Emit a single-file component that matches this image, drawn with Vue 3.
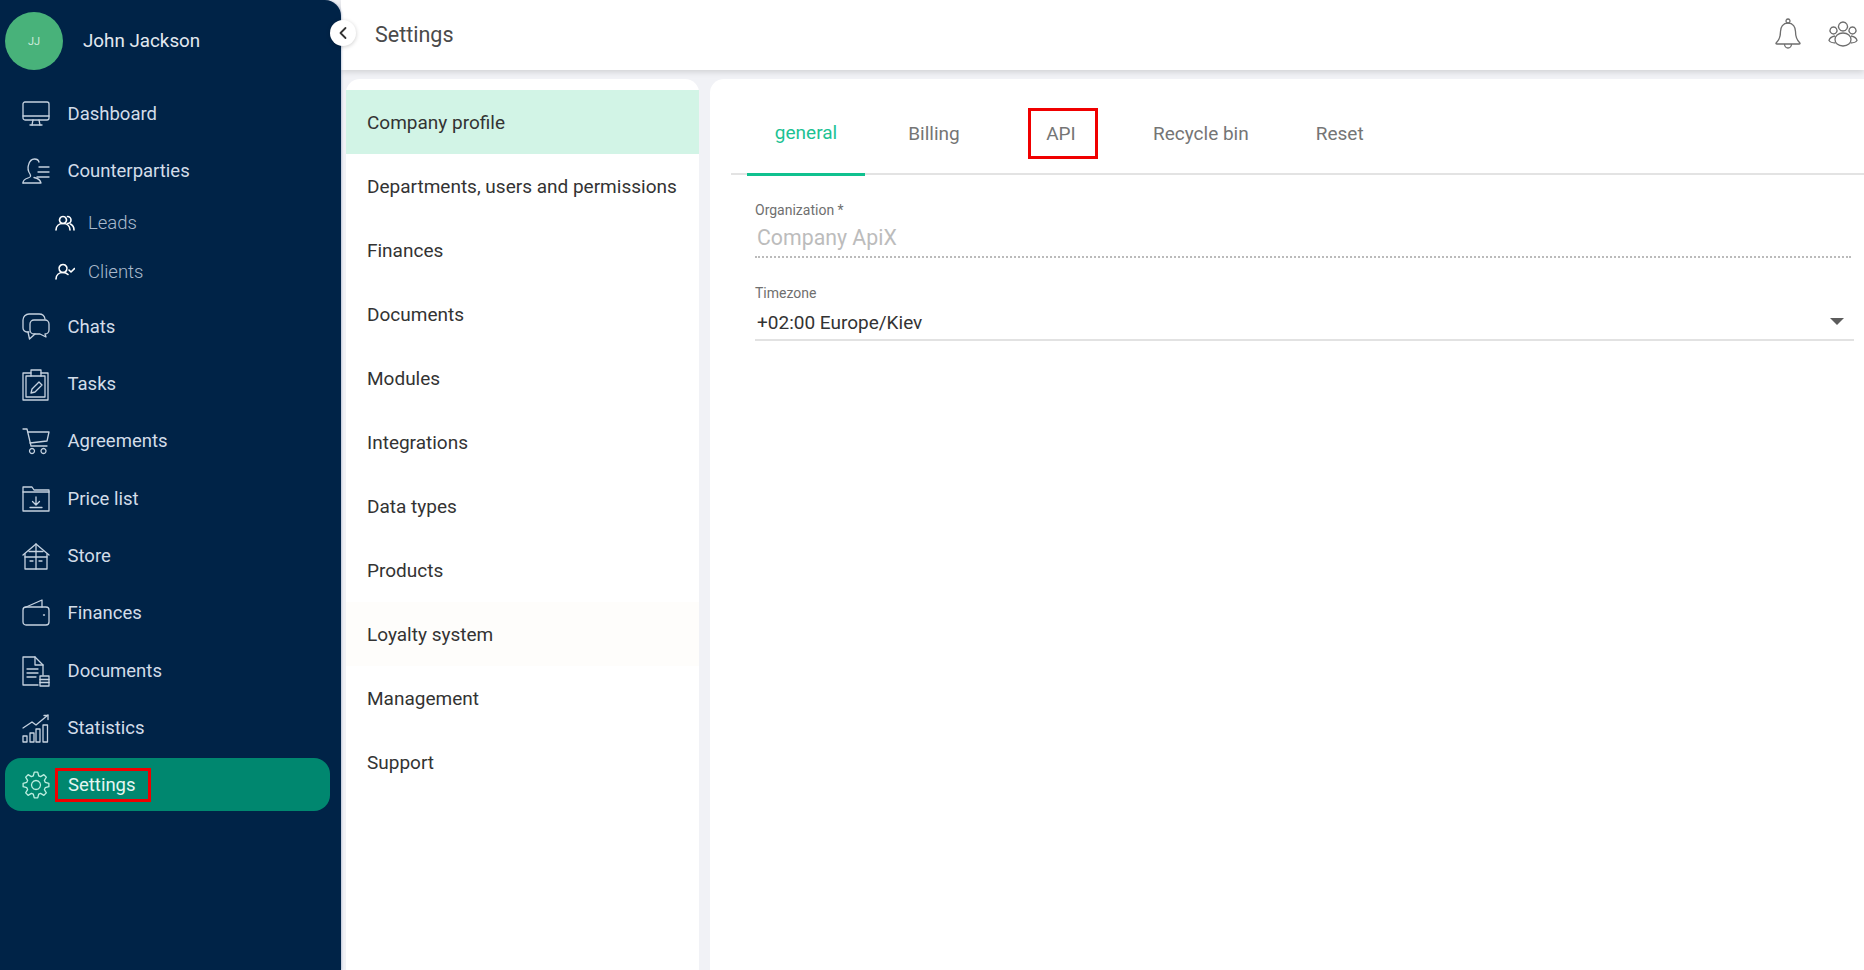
<script setup>
const gear = (() => {
  const cx = 14, cy = 14, n = 8
  let d = ''
  const pt = (r, a) => `${(cx + r * Math.cos(a)).toFixed(2)} ${(cy + r * Math.sin(a)).toFixed(2)}`
  for (let i = 0; i < n; i++) {
    const a = (i * 2 * Math.PI) / n - Math.PI / 2
    const s = (2 * Math.PI) / n
    d += `${i ? 'L' : 'M'}${pt(9.6, a - s * 0.36)} L${pt(13, a - s * 0.17)} L${pt(13, a + s * 0.17)} L${pt(9.6, a + s * 0.36)} `
  }
  return d + 'Z M14 9.5 a4.5 4.5 0 1 0 0.01 0 Z'
})()

const nav = [
  { name: 'Dashboard', paths: ['M3 2h22a2 2 0 0 1 2 2v14a2 2 0 0 1-2 2H3a2 2 0 0 1-2-2V4a2 2 0 0 1 2-2z', 'M1 16h26', 'M11 20l-1 5M17 20l1 5', 'M8 25h12'] },
  { name: 'Counterparties', paths: ['M1 26c0-3 2-4 5-5 3-1 3-2 2-4-2-3-2.500-6-1.500-9 .8-3 3-6 6-6 2 0 4 1 4.500 3', 'M12 20.500c3 .5 6 1.500 7 5.500H1', 'M17 10h10M16 15h11M15 20h12'] },
  {
    name: 'Leads', sub: true,
    paths: ['M8 2.500a3.500 3.500 0 1 0 .01 0z', 'M1 16c0-4 3-6.500 7-6.500s7 2.500 7 6.500', 'M12.500 2.500a3.500 3.500 0 0 1 0 7', 'M15.500 10c2 1 3.500 3 3.500 6'],
  },
  {
    name: 'Clients', sub: true,
    paths: ['M8 1.500a4 4 0 1 0 .01 0z', 'M1 16c0-4 3-6.500 7-6.500 2 0 3.500.5 5 2', 'M14 7l2 2 3.500-3.500'],
  },
  { name: 'Chats', paths: ['M7 19H5a4 4 0 0 1-4-4V7a6 6 0 0 1 6-6h10c3 0 5.500 1.500 6 5', 'M6 19l1.500 7 5.500-5', 'M12 7h11a4 4 0 0 1 4 4v6a4 4 0 0 1-4 4l1 3-6-3h-6a4 4 0 0 1-4-4v-6a4 4 0 0 1 4-4z'] },
  { name: 'Tasks', paths: ['M9 3H1v27h25V3h-7', 'M9 6H4v21h19V6h-4', 'M9 0h10v6H9z', 'M9 23l1-4 7-7 3 3-7 7z'] },
  { name: 'Agreements', paths: ['M1 2h4l4 17h16', 'M6 5h21l-2 9-17 2', 'M10 21.500a2.500 2.500 0 1 0 .01 0zM21.500 21.500a2.500 2.500 0 1 0 .01 0z'] },
  { name: 'Price list', paths: ['M1 26V2h9l2 3h15v21z', 'M1 7h26', 'M14 12v8M10.500 16.500l3.500 3.500 3.500-3.500', 'M8 22.500h12'] },
  { name: 'Store', paths: ['M1 13L14 2l13 11', 'M3 12v15h22V12', 'M14 2v25', 'M3 15h22', 'M8 19h3M17 19h3', 'M7 9.500h14'] },
  { name: 'Finances', paths: ['M4 8h20a3 3 0 0 1 3 3v12a3 3 0 0 1-3 3H4a3 3 0 0 1-3-3V11a3 3 0 0 1 3-3z', 'M3 8.500L20 1v7', 'M21.500 16h1'] },
  { name: 'Documents', paths: ['M16 28H1V0h12l8 8v10', 'M13 0v8h8', 'M5 12h11M5 16h11M5 20h9', 'M18 19h9v10h-9z', 'M18 22.500h9M18 25.500h9'] },
  { name: 'Statistics', paths: ['M1 22h4v6H1zM8 19h4v9H8zM14 15h4v13h-4zM21 11h4.500v17H21z', 'M1 14l9-6 4 3L26 1', 'M22 1.500h4v4'] },
  { name: 'Settings', active: true, paths: [gear] },
]

const menu = ['Company profile', 'Departments, users and permissions', 'Finances', 'Documents', 'Modules', 'Integrations', 'Data types', 'Products', 'Loyalty system', 'Management', 'Support']
const tabs = ['general', 'Billing', 'API', 'Recycle bin', 'Reset']
</script>

<template>
  <div class="app">
    <aside class="sidebar">
      <div class="user">
        <div class="avatar">JJ</div>
        <span class="user-name">John Jackson</span>
      </div>
      <nav class="nav">
        <div
          v-for="item in nav"
          :key="item.name"
          class="item"
          :class="{ sub: item.sub, active: item.active, parent: item.name === 'Counterparties', lastsub: item.name === 'Clients' }"
        >
          <svg v-if="item.sub" class="ic-sub" width="20" height="18" viewBox="0 0 20 18" fill="none">
            <path v-for="(d, i) in item.paths" :key="i" :d="d" />
          </svg>
          <svg v-else class="ic" width="28" height="28" viewBox="0 0 28 28" fill="none">
            <path v-for="(d, i) in item.paths" :key="i" :d="d" />
          </svg>
          <span v-if="item.active" class="boxed-side">{{ item.name }}</span>
          <span v-else>{{ item.name }}</span>
        </div>
      </nav>
    </aside>

    <div class="main">
      <button class="collapse" aria-label="Collapse">
        <svg width="12" height="14" viewBox="0 0 12 14" fill="none"><path d="M8.500 2L3.500 7l5 5" /></svg>
      </button>
      <header class="header">
        <h1 class="title">Settings</h1>
        <div class="header-icons">
          <svg width="28" height="32" viewBox="0 0 28 32" fill="none">
            <path d="M14 5a2 2 0 1 1 .01 0z" />
            <path d="M14 5c-5 0-7.500 4-7.500 8.500 0 5-1 8-4 11-1 1-.5 1.500.5 1.500h22c1 0 1.500-.5.500-1.500-3-3-4-6-4-11C21.500 9 19 5 14 5z" />
            <path d="M10.500 26a3.500 4 0 0 0 7 0" />
          </svg>
          <svg width="30" height="26" viewBox="0 0 30 26" fill="none">
            <path d="M15 1a4.500 4.500 0 1 0 .01 0zM5.500 6a3.500 3.500 0 1 0 .01 0zM24.500 6a3.500 3.500 0 1 0 .01 0z" />
            <path d="M15 12c-5 0-8 3-8 6.500S10 25 15 25s8-3 8-6.500S20 12 15 12z" />
            <path d="M7 15c-3 .5-5.500 2-6 4.500 1 1.500 3.500 2.500 6.500 2.500M23 15c3 .5 5.500 2 6 4.500-1 1.500-3.500 2.500-6.500 2.500" />
          </svg>
        </div>
      </header>

      <div class="content">
        <section class="menu">
          <div
            v-for="(m, i) in menu"
            :key="m"
            class="menu-row"
            :class="{ selected: i === 0, faint: m === 'Loyalty system' }"
          >{{ m }}</div>
        </section>

        <section class="panel">
          <div class="tabs">
            <div v-for="(t, i) in tabs" :key="t" class="tab" :class="{ on: i === 0 }">
              <span v-if="t === 'API'" class="boxed-tab">{{ t }}</span>
              <template v-else>{{ t }}</template>
            </div>
          </div>
          <form class="form" @submit.prevent>
            <label class="lab lab-org">Organization *</label>
            <div class="val val-org">Company ApiX</div>
            <label class="lab lab-tz">Timezone</label>
            <div class="select">
              <span>+02:00 Europe/Kiev</span>
              <i class="caret"></i>
            </div>
          </form>
        </section>
      </div>
    </div>
  </div>
</template>

<style>
html, body { margin: 0; background: #f1f2f6; }
</style>

<style scoped>
* { box-sizing: border-box; }
.app {
  display: flex;
  width: 1864px;
  height: 970px;
  overflow: hidden;
  font-family: Roboto, "Liberation Sans", sans-serif;
  font-size: 19px;
  background: #f1f2f6;
}
.sidebar {
  flex: none;
  width: 341px;
  height: 100%;
  background: #002347;
  border-top-right-radius: 16px;
  color: #d3dde9;
  font-size: 18.500px;
  padding-top: 12px;
  box-shadow: 1px 0 2px rgba(40, 70, 130, .25);
  z-index: 2;
}
.user { display: flex; align-items: center; gap: 20px; padding-left: 5px; height: 58px; color: #e3e9f0; }
.user-name { font-size: 18.800px; margin-top: -1px; }
.avatar {
  width: 58px; height: 58px; border-radius: 50%;
  background: #48b27a; color: #cdeadb;
  display: flex; align-items: center; justify-content: center;
  font-size: 11px;
}
.nav { display: flex; flex-direction: column; padding: 17px 11px 0 5px; }
.item { display: flex; align-items: center; height: 53px; margin-bottom: 4.3px; padding-left: 17px; gap: 17.500px; border-radius: 16px; }
.item.parent { margin-bottom: 1px; }
.item.sub { height: 49px; margin-bottom: 0; padding-left: 50px; gap: 13px; color: #a9b9cc; font-weight: 300; }
.item.lastsub { margin-bottom: 4px; }
.item.active { background: #00876f; color: #e6f6f1; margin-top: -0.5px; }
.ic { flex: none; overflow: visible; stroke: #c5d2e0; stroke-width: 1.3; stroke-linejoin: round; stroke-linecap: round; }
.ic-sub { flex: none; stroke: #fff; stroke-width: 1.6; stroke-linecap: round; stroke-linejoin: round; }
.active .ic { stroke: #bdeee0; }
.boxed-side {
  display: inline-flex; align-items: center;
  width: 96px; height: 34px;
  margin-left: -12.500px; padding-left: 10px;
  border: 3px solid #f00000;
}
.main { position: relative; flex: 1; min-width: 0; display: flex; flex-direction: column; }
.collapse {
  position: absolute; left: -11px; top: 20px; z-index: 3;
  width: 26px; height: 26px; padding: 0; border: 0; border-radius: 50%;
  background: #fff; box-shadow: 0 1px 4px rgba(0, 0, 0, .2);
  display: flex; align-items: center; justify-content: center;
}
.collapse path { stroke: #333; stroke-width: 1.800; stroke-linecap: round; stroke-linejoin: round; }
.header {
  flex: none; height: 70px; background: #fff;
  display: flex; align-items: center; justify-content: space-between;
  padding: 0 6px 0 34px;
  box-shadow: 0 2px 6px rgba(0, 0, 0, .14);
  z-index: 1;
}
.title { margin: -2px 0 0; font-size: 21.500px; font-weight: 400; color: #4a4a4a; }
.header-icons { display: flex; align-items: center; gap: 26px; margin-top: -2px; }
.header-icons svg { stroke: #6e6e6e; stroke-width: 1.300; overflow: visible; }
.content { flex: 1; min-height: 0; display: flex; gap: 11px; padding: 9px 0 0 5px; }
.menu { flex: none; width: 353px; background: #fff; border-radius: 14px 14px 0 0; padding-top: 11px; }
.menu-row { height: 64px; display: flex; align-items: center; padding-left: 21px; color: #333; white-space: nowrap; }
.menu-row.selected { background: #d2f4e6; }
.menu-row.faint { background: #fefdfb; }
.panel { flex: 1; min-width: 0; background: #fff; border-radius: 14px 0 0 0; padding-left: 21px; }
.tabs { display: flex; gap: 10px; height: 96px; padding: 12px 0 0 16px; border-bottom: 2px solid #e3e3e3; }
.tab {
  position: relative; min-width: 118px; padding: 0 22px; height: 84px;
  display: flex; align-items: center; justify-content: center;
  color: #757575; white-space: nowrap;
}
.tab.on { color: #1cc293; border-bottom: 3px solid #10c18f; margin-bottom: -2px; height: 85px; padding-top: 1px; }
.boxed-tab {
  display: inline-flex; align-items: center; justify-content: center;
  width: 70px; height: 51px; margin: 0 -25px 0 -23px; padding-right: 4px;
  border: 3px solid #f00000;
}
.form { padding: 27px 10px 0 25px; display: flex; flex-direction: column; margin-left: -1px; }
.lab { font-size: 14px; line-height: 16px; color: #6f6f6f; }
.val-org {
  margin-top: 7px; padding: 1px 0 8px 2px; margin-right: 3px; height: 33px;
  font-size: 21.300px; line-height: 24px; color: #bcbcbc;
  border-bottom: 2px dotted #bbb;
}
.lab-tz { margin-top: 27px; }
.select {
  margin-top: 10px; padding: 2px 10px 6px 2px; height: 30px;
  display: flex; align-items: center; justify-content: space-between;
  line-height: 24px; color: #333;
  border-bottom: 2px solid #e2e2e2;
}
.caret { width: 0; height: 0; border-left: 7px solid transparent; border-right: 7px solid transparent; border-top: 7px solid #5c5c5c; margin-top: -3px; }
</style>
